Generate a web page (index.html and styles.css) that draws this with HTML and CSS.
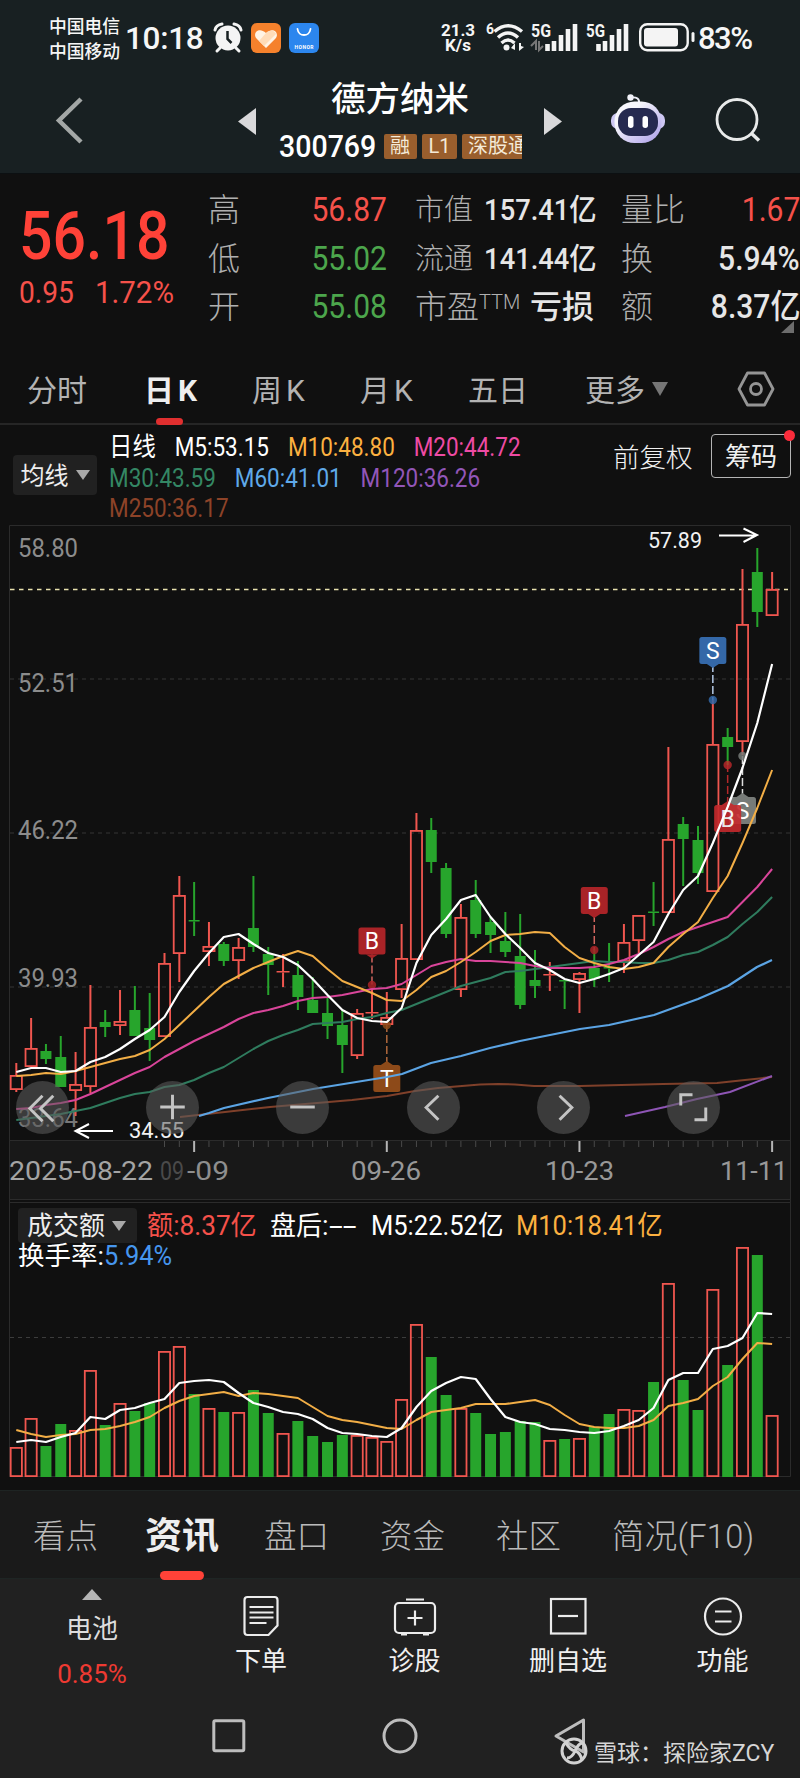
FILE: index.html
```
<!DOCTYPE html>
<html lang="zh-CN">
<head>
    <meta charset="UTF-8">
    <meta name="viewport" content="width=device-width, initial-scale=1.0">
    <title>德方纳米 300769</title>
    <link rel="stylesheet" href="styles.css">
</head>
<body>
    <header class="top">
        <div class="status">
            <div class="carriers">中国电信<br>中国移动</div>
            <div class="clock">10:18</div>
            <svg class="alarm" width="28" height="30" viewBox="0 0 28 30">
                <circle cx="14" cy="15" r="12.5" fill="#f4f4f4"/>
                <path d="M1 7Q2 2 8 1M27 7Q26 2 20 1M6 25l-3 3M22 25l3 3" fill="none" stroke="#f4f4f4" stroke-width="3" stroke-linecap="round"/>
                <path d="M13.5 8v8l4 4" fill="none" stroke="#182022" stroke-width="2.5"/>
            </svg>
            <svg class="app-orange" width="30" height="30" viewBox="0 0 30 30">
                <rect width="30" height="30" rx="6" fill="#f5812c"/>
                <path d="M15 25L5.5 15.500C1 10 8 3.500 15 10c7-6.500 14 0 9.500 5.500z" fill="#fff3e4"/>
                <path d="M15 10c5-4 9-2 10 1l-12 12-5-5z" fill="#ffdcb8"/>
            </svg>
            <svg class="app-blue" width="30" height="30" viewBox="0 0 30 30">
                <rect width="30" height="30" rx="6" fill="#2c86ee"/>
                <path d="M8.500 6c1 8 12 8 13 0" fill="none" stroke="#fff" stroke-width="1.800" stroke-linecap="round"/>
                <text x="15" y="26" text-anchor="middle" textLength="19" font-size="5" font-weight="700" fill="#fff">HONOR</text>
            </svg>
            <div class="speed">21.3<br>K/s</div>
            <svg class="wifi" width="38" height="30" viewBox="0 0 38 30">
                <text x="0" y="12" font-size="14" font-weight="700" fill="#f4f4f4">6</text>
                <g fill="none" stroke="#f4f4f4" stroke-width="3.400">
                    <path d="M8.500 9.500Q22-2 36 9.500M12 15.500Q22 6.500 32 15.500M15.500 21q6.500-6 13 0"/>
                </g>
                <circle cx="20.500" cy="25.500" r="3" fill="#f4f4f4"/>
                <path d="M25 26l4-5v7zM33 21v8l5-4-3-1v-3z" fill="#f4f4f4"/>
            </svg>
            <svg class="signal" width="47" height="30" viewBox="0 0 47 30">
                <text x="0" y="15" font-size="18" font-weight="700" textLength="20" lengthAdjust="spacingAndGlyphs" fill="#f4f4f4">5G</text>
                <path d="M0 24l5-5v9M8 19v9l4-4" stroke="#777" stroke-width="2" fill="none"/>
                <path d="M16.500 29v-7M23 29v-10M30 29v-16M37 29v-22M44 29v-27" stroke="#f4f4f4" stroke-width="4.600" fill="none"/>
            </svg>
            <svg class="signal" width="43" height="30" viewBox="0 0 43 30">
                <text x="0" y="15" font-size="18" font-weight="700" textLength="19" lengthAdjust="spacingAndGlyphs" fill="#f4f4f4">5G</text>
                <path d="M12.500 29v-7M19 29v-10M26 29v-16M33 29v-22M40 29v-27" stroke="#f4f4f4" stroke-width="4.600" fill="none"/>
            </svg>
            <svg class="battery" width="56" height="29" viewBox="0 0 56 29">
                <rect x="1.200" y="1.200" width="47.500" height="26" rx="7" fill="none" stroke="#f4f4f4" stroke-width="2.400"/>
                <rect x="5" y="5" width="34" height="18.500" rx="3" fill="#f4f4f4"/>
                <rect x="52.500" y="9" width="3" height="10" rx="1.500" fill="#f4f4f4"/>
            </svg>
            <div class="percent">83%</div>
        </div>
        <div class="titlebar">
            <svg class="back" width="28" height="48" viewBox="0 0 28 48"><path d="M25 2L3 23.500 25 45" fill="none" stroke="#a3a7a6" stroke-width="4.500"/></svg>
            <svg class="prev" width="18" height="27" viewBox="0 0 18 27"><path d="M18 0v27L0 13.500z" fill="#d9d9db"/></svg>
            <div class="stock">
                <h1>德方纳米</h1>
                <div class="code-row">
                    <span class="code"><span class="narrow">300769</span></span>
                    <span class="tag">融</span>
                    <span class="tag tag-l1">L1</span>
                    <span class="tag">深股通</span>
                </div>
            </div>
            <svg class="next" width="18" height="27" viewBox="0 0 18 27"><path d="M0 0v27l18-13.500z" fill="#d9d9db"/></svg>
            <svg class="robot" width="54" height="50" viewBox="0 0 54 50">
                <defs>
                    <linearGradient id="shell" x1="0" y1="0" x2="1" y2="1">
                        <stop offset=".3" stop-color="#f6f6fc"/>
                        <stop offset="1" stop-color="#a99be8"/>
                    </linearGradient>
                </defs>
                <path d="M20 3.500q9-1 8 6" fill="none" stroke="#eeeef8" stroke-width="2"/>
                <circle cx="19.500" cy="3.500" r="3.200" fill="#f2f2fa"/>
                <rect x="0" y="19" width="54" height="16" rx="7" fill="#cdc7f3"/>
                <rect x="3.500" y="7.500" width="47" height="41.500" rx="20" fill="url(#shell)"/>
                <rect x="7" y="14" width="40" height="28" rx="13" fill="#262a50"/>
                <rect x="17" y="22" width="5.500" height="12" rx="2.700" fill="#fff"/>
                <rect x="31.500" y="22" width="5.500" height="12" rx="2.700" fill="#fff"/>
            </svg>
            <svg class="search" width="46" height="45" viewBox="0 0 46 45"><circle cx="22" cy="21.500" r="20" fill="none" stroke="#e8eaea" stroke-width="2.800"/><path d="M36 35l8 7.500" stroke="#e8eaea" stroke-width="3.500"/></svg>
        </div>
    </header>

    <section class="quote">
        <div class="price">
            <div class="last"><span class="narrow">56.18</span></div>
            <div class="change"><span class="narrow">0.95</span><span class="narrow">1.72%</span></div>
        </div>
        <dl class="stats">
            <div><dt>高</dt><dd class="up">56.87</dd></div>
            <div><dt>低</dt><dd class="down">55.02</dd></div>
            <div><dt>开</dt><dd class="down">55.08</dd></div>
        </dl>
        <dl class="stats">
            <div class="small"><dt>市值</dt><dd>157.41亿</dd></div>
            <div class="small"><dt>流通</dt><dd>141.44亿</dd></div>
            <div><dt>市盈<sup>TTM</sup></dt><dd class="cjk">亏损</dd></div>
        </dl>
        <dl class="stats">
            <div><dt>量比</dt><dd class="up">1.67</dd></div>
            <div><dt>换</dt><dd>5.94%</dd></div>
            <div><dt>额</dt><dd>8.37亿</dd></div>
            <i class="corner"></i>
        </dl>
    </section>

    <nav class="periods">
        <a>分时</a>
        <a class="active">日<b>K</b></a>
        <a>周<b>K</b></a>
        <a>月<b>K</b></a>
        <a>五日</a>
        <a class="more">更多<i class="caret"></i></a>
        <svg width="38" height="36" viewBox="0 0 38 36"><path d="M10.500 2h17l8.500 16-8.500 16h-17L2 18z" fill="none" stroke="#959595" stroke-width="2.800" stroke-linejoin="round"/><circle cx="19" cy="18" r="5.500" fill="none" stroke="#959595" stroke-width="2.800"/></svg>
    </nav>

    <section class="legend">
        <button class="picker">均线<i class="caret"></i></button>
        <div class="averages">
            <div><span class="white cjk">日线</span><span class="white">M5:53.15</span><span class="m10">M10:48.80</span><span class="m20">M20:44.72</span></div>
            <div><span class="m30">M30:43.59</span><span class="m60">M60:41.01</span><span class="m120">M120:36.26</span></div>
            <div><span class="m250">M250:36.17</span></div>
        </div>
        <span class="adjust">前复权</span>
        <button class="chips">筹码<i class="dot"></i></button>
    </section>

    <section class="chart">
        <svg id="kline" width="800" height="675" viewBox="0 525 800 675"></svg>
        <div class="tools">
            <button><svg viewBox="0 0 54 54"><path d="M27 15L14 28l13 13M38 15L25 28l13 13"/></svg></button>
            <button><svg viewBox="0 0 54 54"><path d="M27 14v25M14.500 26.500h25"/></svg></button>
            <button><svg viewBox="0 0 54 54"><path d="M14.500 26.500h25"/></svg></button>
            <button><svg viewBox="0 0 54 54"><path d="M32 15L19.500 27 32 39.500"/></svg></button>
            <button><svg viewBox="0 0 54 54"><path d="M23 15l12.500 12L23 39.500"/></svg></button>
            <button><svg viewBox="0 0 54 54"><path d="M14 25V14h12M28 39.500h11.500V27"/></svg></button>
        </div>
    </section>

    <section class="volume">
        <div class="volume-head">
            <button class="picker">成交额<i class="caret"></i></button>
            <span class="amount"><span class="narrow">额:8.37亿</span></span>
            <span class="after"><em>盘后</em>:<span class="dashes">--</span></span>
            <span class="v5"><span class="narrow">M5:22.52亿</span></span>
            <span class="v10"><span class="narrow">M10:18.41亿</span></span>
        </div>
        <div class="turnover">换手率:<b>5.94%</b></div>
        <svg id="bars" width="800" height="290" viewBox="0 1200 800 290"></svg>
    </section>

    <nav class="pages">
        <a>看点</a>
        <a class="active">资讯</a>
        <a>盘口</a>
        <a>资金</a>
        <a>社区</a>
        <a class="fade">简况(F10)</a>
    </nav>

    <footer class="bottom">
        <div class="actions">
            <div class="sector"><i class="caret up-caret"></i><span>电池</span><strong>0.85%</strong></div>
            <div><svg width="44" height="42" viewBox="0 0 44 42"><path d="M8.500 2h27q3 0 3 3v25.500L29.500 40h-21q-3 0-3-3V5q0-3 3-3z"/><path d="M10.500 12h24M10.500 17.500h24M10.500 22.500h24M10.500 28h17"/></svg><span>下单</span></div>
            <div><svg width="44" height="42" viewBox="0 0 44 42"><rect x="2" y="8" width="40" height="30" rx="4"/><path d="M13 4.500h18M22 15.500v15M14.500 23h15M8 39.500h6M30 39.500h6"/></svg><span>诊股</span></div>
            <div><svg width="44" height="42" viewBox="0 0 44 42"><rect x="5" y="4" width="34.500" height="34.500"/><path d="M12 21h20"/></svg><span>删自选</span></div>
            <div><svg width="44" height="42" viewBox="0 0 44 42"><circle cx="22" cy="21.500" r="18"/><path d="M14 16.500h16.500M14 26.500h16.500"/></svg><span>功能</span></div>
        </div>
        <div class="system">
            <svg width="34" height="34" viewBox="0 0 34 34"><rect x="1.800" y="1.800" width="30" height="30" rx="1.500"/></svg>
            <svg width="36" height="36" viewBox="0 0 36 36"><circle cx="18" cy="18" r="16"/></svg>
            <svg width="32" height="36" viewBox="0 0 32 36"><path d="M29.500 2v32L2 18z"/></svg>
        </div>
        <div class="watermark">
            <svg width="28" height="28" viewBox="0 0 28 28"><circle cx="14" cy="14" r="12"/><path d="M6 6q4 7 9 8t7 9M22 6q-4 1-7 8t-8 7"/></svg>
            <span>雪球</span><span>：</span><span>探险家ZCY</span>
        </div>
    </footer>
    <script src="chart.js"></script>
</body>
</html>
```
FILE: styles.css
```
* { box-sizing: border-box; }
body { margin: 0; width: 800px; height: 1778px; overflow: hidden; background: #101010; color: #e6e6e6; font-family: Roboto, "Noto Sans CJK SC", sans-serif; }
svg { display: block; flex: none; overflow: visible; }
svg text { font-family: Roboto, "Noto Sans CJK SC", sans-serif; }
button { font: inherit; color: inherit; border: none; padding: 0; }
h1, dl, dd { margin: 0; font-weight: 400; }
em, i { font-style: normal; }
.narrow { display: inline-block; transform: scaleX(.88); transform-origin: left; }

/* status bar and title */
.top { height: 174px; background: #182022; border-bottom: 1px solid #0c1012; }
.status { display: flex; height: 77px; padding: 0 0 0 49px; color: #f6f6f6; white-space: nowrap; }
.carriers { width: 76px; padding-top: 15px; font-size: 17.800px; line-height: 24.500px; font-weight: 500; }
.clock { width: 89px; padding-top: 20px; font-size: 31.500px; line-height: 38px; font-weight: 500; letter-spacing: -.3px; }
.alarm { margin-top: 23px; }
.app-orange { margin: 23px 0 0 9px; }
.app-blue { margin: 23px 0 0 8px; }
.speed { width: 42px; margin-left: 118px; padding-top: 23px; margin-right: 7px; text-align: center; font-size: 17px; line-height: 15px; font-weight: 700; }
.wifi { margin: 22px 0 0 0; }
.signal { margin: 22px 0 0 7px; }
.signal + .signal { margin-left: 8px; }
.battery { margin: 23px 0 0 10px; }
.percent { padding: 20px 0 0 3px; font-size: 31px; line-height: 38px; font-weight: 500; letter-spacing: -1.500px; }
.titlebar { display: flex; height: 96px; padding-left: 56px; }
.back { margin-top: 20px; }
.prev { margin: 31px 0 0 154px; }
.stock { width: 266px; margin: 0 0 0 22px; padding-left: 1px; }
.stock h1 { padding-left: 52px; font-size: 34.500px; line-height: 44px; font-weight: 500; color: #fff; white-space: nowrap; }
.code-row { display: flex; align-items: center; width: 243px; height: 44px; margin-top: 4px; padding-bottom: 2px; gap: 5px; overflow: hidden; }
.code { width: 100px; flex: none; font-size: 31px; font-weight: 500; color: #fff; }
.code .narrow { transform: scaleX(.92); }
.tag { flex: none; height: 25px; padding: 0 6px; border-radius: 2px; background: #995e2d; color: #f4ead8; font-size: 20px; line-height: 24px; }
.tag:nth-child(2) { width: 33px; }
.tag-l1 { width: 35px; text-align: center; }
.next { margin: 31px 0 0 0; }
.robot { margin: 17px 0 0 49px; }
.search { margin: 21px 0 0 50px; }

/* quote */
.quote { display: flex; height: 176px; padding: 12px 0 0 19px; }
.price { flex: none; width: 189px; color: #ff4238; }
.last { font-size: 67px; line-height: 76px; padding-top: 12px; font-weight: 500; height: 86px; white-space: nowrap; }
.change { display: flex; font-size: 32px; line-height: 38px; padding-top: 1px; color: #f5514a; }
.change span { width: 76px; }
.change span + span { transform: scaleX(.92); }
.stats { position: relative; flex: none; width: 179px; margin-right: 28px; }
.stats + .stats { margin-right: 27px; }
.stats > div { display: flex; justify-content: space-between; height: 48.500px; line-height: 48px; white-space: nowrap; }
.stats dt { font-size: 32px; color: #b0b0b0; font-weight: 300; }
.stats sup { font-size: 20px; line-height: 10px; vertical-align: 9px; }
.stats dd { font-size: 33px; font-weight: 500; transform: scaleX(.91); transform-origin: right; }
.stats .small dt { font-size: 29px; }
.stats .small dd { font-size: 30px; transform: scaleX(.91); }
.stats .cjk { font-size: 32px; transform: none; }
.stats .up { color: #f5514a; font-weight: 400; }
.stats .down { color: #4ca64c; font-weight: 400; }
.corner { position: absolute; right: 6px; top: 135px; border-left: 13px solid transparent; border-bottom: 12px solid #6d6d6d; }

/* chart period tabs */
.periods { display: flex; height: 75px; border-bottom: 2px solid #262626; padding-left: 27px; font-size: 30px; line-height: 81px; color: #b3b3b3; }
.periods a { position: relative; height: 73px; white-space: nowrap; }
.periods b { margin-left: 4px; font-weight: 400; }
.periods a:nth-child(1) { width: 117px; }
.periods a:nth-child(2), .periods a:nth-child(3), .periods a:nth-child(4) { width: 108px; }
.periods a:nth-child(5) { width: 117px; }
.periods .more { width: 152px; }
.periods .active, .periods .active b { color: #eee; font-weight: 700; }
.periods .active::after { content: ""; position: absolute; left: 12px; bottom: -2px; width: 27px; height: 7px; border-radius: 4px; background: #e02f2f; }
.periods svg { margin-top: 21px; }
.caret { display: inline-block; border: 7px solid transparent; border-top: 10px solid #a9a9a9; border-bottom: 0; margin-left: 7px; vertical-align: 4px; }
.more .caret { border-width: 14px 8px 0; border-top-color: #767676; margin-left: 7px; vertical-align: 5px; }

/* moving average legend */
.legend { display: flex; height: 100px; padding-left: 13px; }
.picker { display: block; height: 40px; border-radius: 4px; background: #212121; color: #eee; font-size: 24px; line-height: 42px; white-space: nowrap; }
.legend .picker { flex: none; width: 84px; margin-top: 30px; }
.averages { flex: none; width: 493px; margin-left: 12px; padding-top: 8px; font-size: 25px; line-height: 30.500px; white-space: nowrap; transform: scaleX(.9); transform-origin: left; }
.averages span { margin-right: 21px; }
.averages .cjk { font-size: 26px; line-height: 24px; }
.white { color: #fff; }
.m10 { color: #fcb140; }
.m20 { color: #ef4ba4; }
.m30 { color: #348764; }
.m60 { color: #5fa9e9; }
.m120 { color: #9256b8; }
.m250 { color: #8d4328; }
.adjust { flex: none; width: 98px; margin-left: 11px; font-size: 26.500px; line-height: 66px; font-weight: 300; color: #f0f0f0; }
.chips { position: relative; width: 80px; height: 44px; margin-top: 9px; border: 1px solid #b5b5b5; border-radius: 4px; background: none; font-size: 26px; line-height: 44px; color: #f0f0f0; }
.dot { position: absolute; right: -5px; top: -5px; width: 11px; height: 11px; border-radius: 50%; background: #fb2c3b; }

/* candles */
.chart { position: relative; height: 675px; }
.tools { position: absolute; left: 15.500px; top: 556px; display: flex; gap: 77.400px; }
.tools button { width: 53px; height: 53px; border-radius: 50%; background: rgba(92, 92, 92, .56); }
.tools svg { width: 53px; height: 53px; fill: none; stroke: #c4c4c4; stroke-width: 3; }

/* turnover */
.volume { position: relative; height: 290px; }
.volume-head { display: flex; padding: 8px 0 0 18px; height: 43px; font-size: 27px; line-height: 36px; white-space: nowrap; }
.volume em { font-size: 26px; }
.volume-head .picker { width: 119px; height: 35px; margin-right: 10px; padding-right: 2px; font-size: 26px; line-height: 36px; }
.volume-head .narrow { transform: scaleX(.945); }
.amount { width: 123px; color: #f5514a; }
.amount .narrow { transform: scaleX(.97); }
.after { width: 101px; color: #fff; }
.dashes { display: inline-block; transform: scaleX(1.85); transform-origin: left; }
.v5 { width: 145px; color: #fff; }
.v10 { color: #fcb140; }
.turnover { padding-left: 18px; font-size: 26.500px; line-height: 26px; color: #fff; }
.turnover b { display: inline-block; font-weight: 400; font-size: 27px; color: #4696ee; transform: scaleX(.94); transform-origin: left; }
#bars { position: absolute; left: 0; top: 0; z-index: -1; }

/* page tabs */
.pages { display: flex; height: 88px; background: #1a1a1a; border-top: 1px solid #1e2423; padding-left: 33px; font-size: 32.500px; line-height: 92px; color: #bababa; font-weight: 300; white-space: nowrap; }
.pages a { position: relative; width: 116px; }
.pages a:nth-child(1) { width: 112px; }
.pages .active { width: 119px; font-size: 37px; font-weight: 700; color: #eee; }
.pages .active::after { content: ""; position: absolute; left: 15px; bottom: -2px; width: 44px; height: 9px; border-radius: 5px; background: #ff4238; z-index: 1; }
.pages .fade { width: 145px; letter-spacing: .3px; }

/* bottom bar */
.bottom { position: relative; height: 200px; background: #212121; border-top: 1px solid #1e2524; }
.actions { display: grid; grid-template-columns: 184px 154px 153px 154px 155px; height: 124px; }
.actions > div { display: flex; flex-direction: column; align-items: center; font-size: 26px; line-height: 36px; padding-top: 16px; color: #f0f0f0; }
.actions svg { fill: none; stroke: #ececec; stroke-width: 2.200; margin-bottom: 6px; }
.actions .sector { padding-top: 10px; }
.up-caret { border: 10px solid transparent; border-bottom: 11px solid #b5b5b5; border-top: 0; margin: 0 0 11px; }
.sector strong { margin-top: 9px; font-weight: 400; font-size: 26px; color: #ee3a32; }
.sector span { color: #ddd; }
.system { display: flex; padding-left: 212px; height: 66px; align-items: center; }
.system svg { fill: none; stroke: #bdbdbd; stroke-width: 3; stroke-linejoin: round; margin-right: 136px; }
.watermark { position: absolute; left: 560px; top: 155px; display: flex; align-items: center; height: 34px; font-size: 23px; color: #d6d6d6; white-space: nowrap; }
.watermark svg { margin-right: 6px; fill: none; stroke: #d2d2d2; stroke-width: 3; }
```
FILE: chart.js
```
const X0 = 16.3, STEP = 14.82;
const x = i => X0 + STEP * i;

// direction, high, body top, body bottom, low, top of turnover bar
const days = [
    ['r', 1063, 1075, 1090, 1092, 1447], ['r', 1018, 1048, 1067, 1067, 1418], ['g', 1044, 1051, 1059, 1064, 1446],
    ['g', 1036, 1057, 1087, 1087, 1424], ['r', 1052, 1084, 1091, 1116, 1430], ['r', 985, 1027, 1087, 1093, 1370],
    ['g', 1010, 1022, 1027, 1037, 1425], ['r', 990, 1021, 1026, 1035, 1403], ['g', 986, 1010, 1036, 1036, 1411],
    ['g', 993, 1028, 1040, 1061, 1403], ['r', 953, 963, 1037, 1037, 1351], ['r', 876, 895, 954, 982, 1346],
    ['g', 882, 920, 921.5, 936, 1394], ['r', 922, 946, 952, 966, 1408], ['g', 942, 944, 961, 966, 1412],
    ['r', 938, 947, 961, 979, 1412], ['g', 876, 928, 947, 952, 1390], ['g', 947, 954, 965, 995, 1413],
    ['r', 954, 971, 972.5, 987, 1433], ['g', 961, 975, 997, 1010, 1421], ['g', 977, 1000, 1013, 1013, 1436],
    ['g', 997, 1013, 1026, 1039, 1442], ['g', 1010, 1025, 1045, 1073, 1435], ['r', 1009, 1013, 1056, 1059, 1435],
    ['r', 988, 1012, 1013.5, 1019, 1437], ['r', 992, 1017, 1025, 1025, 1441], ['r', 924, 958, 990, 998, 1399],
    ['r', 813, 830, 960, 960, 1324], ['g', 818, 830, 862, 873, 1357], ['g', 863, 868, 934, 938, 1395],
    ['r', 904, 917, 990, 997, 1408], ['g', 880, 900, 934, 938, 1413], ['g', 917, 922, 935, 953, 1434],
    ['g', 912, 941, 952, 957, 1432], ['g', 914, 956, 1005, 1009, 1421], ['g', 950, 980, 986, 998, 1422],
    ['r', 962, 974, 975.5, 991, 1440], ['g', 980, 980, 981.5, 1009, 1439], ['r', 972, 973, 980, 1013, 1438],
    ['g', 949, 968, 979, 987, 1427], ['g', 943, 967, 968.5, 982, 1414], ['r', 924, 942, 962, 973, 1409],
    ['r', 915, 915, 941, 953, 1410], ['g', 882, 911.5, 913, 926, 1382], ['r', 747, 839, 913, 913, 1283],
    ['g', 817, 824, 839, 886, 1380], ['g', 826, 840, 873, 884, 1410], ['r', 700, 744, 892, 892, 1289],
    ['g', 728, 737, 747, 765, 1365], ['r', 569, 624, 742, 755, 1247], ['g', 548, 572, 612, 627, 1255],
    ['r', 572, 589, 616, 616, 1415]
];

const m5 = [1072,1068,1068,1072,1071,1062,1057,1049,1039,1030,1017,992,971,953,937,934,944,953,957,965,979,995,1010,1018,1021,1022,1008,963,935,919,900,895,917,934,948,963,970,979,983,979,974,968,955,942,914,890,876,843,807,768,723,664];
const m10 = [1076,1075,1073,1074,1071,1067,1063,1059,1056,1050,1039,1025,1011,997,984,976,968,962,956,951,956,969,981,987,993,1000,1001,990,977,971,962,952,941,935,934,932,933,947,958,963,967,969,967,963,947,934,922,898,876,843,808,770];
const m20 = [1109,1108,1105,1103,1100,1094,1087,1080,1073,1067,1057,1049,1041,1034,1027,1019,1013,1010,1006,1001,998,997,995,992,989,988,984,975,966,962,959,961,961,962,963,966,968,968,968,967,964,960,954,947,939,932,927,922,917,902,887,869];
const m30 = [1120,1118,1116,1114,1111,1108,1103,1098,1094,1092,1087,1085,1080,1073,1067,1058,1049,1041,1035,1030,1024,1023,1022,1019,1017,1013,1010,1004,998,992,986,982,978,972,971,969,967,965,963,961,962,962,963,963,960,955,952,945,937,924,912,897];
const v5 = [1442,1440,1442,1437,1433,1417,1419,1410,1408,1403,1399,1383,1381,1380,1382,1393,1403,1407,1412,1414,1419,1428,1433,1434,1436,1437,1428,1407,1391,1383,1377,1379,1399,1417,1422,1424,1429,1430,1432,1433,1431,1426,1420,1408,1380,1373,1373,1349,1346,1338,1313,1314];
const v10 = [1430,1434,1437,1435,1434,1430,1429,1426,1422,1417,1408,1401,1396,1394,1392,1396,1393,1394,1396,1398,1407,1416,1420,1422,1425,1428,1429,1420,1412,1410,1408,1404,1404,1404,1402,1400,1405,1415,1424,1427,1428,1428,1426,1420,1406,1403,1399,1386,1377,1359,1343,1344];

// the long averages are nearly straight, a few points are enough
const m60 = '199,1116 209,1113 224,1108 268,1098 313,1089 387,1077 402,1074 431,1063 461,1056 490,1048 520,1041 535,1038 580,1029 609,1025 654,1015 698,999 728,986 757,967 772,960';
const m120 = '625,1116 665,1107 697,1099 730,1092 772,1076';
const m250 = '180,1117 225,1112 270,1107 352,1100 387,1096 415,1091 438,1088 462,1086 480,1084.500 498,1084 515,1084.500 534,1086 580,1086 663,1084 717,1083 745,1080 772,1077';

const RED = '#f0564f', GREEN = '#27a52c';

function line(x1, y1, x2, y2, color, extra = '') {
    return `<line x1="${x1}" y1="${y1}" x2="${x2}" y2="${y2}" stroke="${color}" ${extra}/>`;
}

function curve(points, color, width = 2) {
    const p = typeof points === 'string' ? points : points.map((y, i) => x(i) + ',' + y).join(' ');
    return `<polyline points="${p}" fill="none" stroke="${color}" stroke-width="${width}" stroke-linejoin="round"/>`;
}

function label(str, lx, y, width, size, color) {
    return `<text x="${lx}" y="${y}" textLength="${width}" lengthAdjust="spacingAndGlyphs" font-size="${size}" fill="${color}">${str}</text>`;
}

function box(cx, top, bottom, color) {
    if (color === 'g') return `<rect x="${cx - 5.5}" y="${top}" width="11" height="${bottom - top}" fill="${GREEN}"/>`;
    if (bottom - top < 2) return `<rect x="${cx - 6.5}" y="${top}" width="13" height="${bottom - top}" fill="${RED}"/>`;
    return `<rect x="${cx - 5.6}" y="${top + .9}" width="11.2" height="${bottom - top - 1.8}" fill="none" stroke="${RED}" stroke-width="1.8"/>`;
}

function candle([c, high, top, bottom, low], i) {
    const color = c === 'r' ? RED : GREEN;
    return line(x(i), high, x(i), top, color, 'stroke-width="2"') + line(x(i), bottom, x(i), low, color, 'stroke-width="2"') + box(x(i), top, bottom, c);
}

// trade flag: letter box, dashed leader, dot on the candle
function flag(letter, i, top, dotY, color, opacity = 1, leader = color) {
    const cx = x(i), below = dotY > top;
    const tip = below ? top + 27 : top;
    const d = below ? 4 : -4;
    return `<g opacity="${opacity}">` + line(cx, tip, cx, dotY, leader, 'stroke-width="1.5" stroke-dasharray="8 3"') +
        `<circle cx="${cx}" cy="${dotY}" r="4.2" fill="${color}" opacity=".85"/>` +
        `<rect x="${cx - 13.5}" y="${top}" width="27" height="27" rx="2.5" fill="${color}"/>` +
        `<path d="M${cx - 6} ${tip}l6 ${d}l6 ${-d}z" fill="${color}"/>` +
        `<text x="${cx}" y="${top + 21.5}" text-anchor="middle" font-size="23" fill="#fff">${letter}</text></g>`;
}

function drawKline() {
    let out = '<rect x="9" y="1140" width="782" height="60" fill="#181818"/>';
    out += '<path d="M9.500 1200V525.500H790.500V1200M9.500 1140.500H790.500M9.500 1199.500H790.500" fill="none" stroke="#2b2b2b"/>';
    [679, 833, 987].forEach(y => out += line(10, y, 790, y, '#353535', 'stroke-dasharray="4 4"'));
    out += line(10, 589.500, 788, 589.500, '#e9e2ae', 'stroke-width="1.5" stroke-dasharray="4.5 4.500"');
    out += label('58.80', 18, 557, 60, 25, '#8c8c8c') + label('52.51', 18, 692, 60, 25, '#8c8c8c') +
        label('46.22', 18, 839, 60, 25, '#8c8c8c') + label('39.93', 18, 987, 60, 25, '#8c8c8c') + label('33.64', 18, 1127, 60, 25, '#777');
    out += days.map(candle).join('');
    out += flag('S', 49, 797, 756, '#777b78', 1, '#ddd') + flag('B', 48, 805, 765, '#c62a2d', .9);
    out += flag('B', 24, 927.5, 985, '#a92327', 1, '#d2655f') + flag('T', 25, 1065, 1025, '#8d4a19', 1, '#b0683c') + flag('B', 39, 887, 950, '#a92327', 1, '#d2655f') + flag('S', 47, 637, 700, '#3468a8', 1, '#b5cbe8');
    out += curve(m250, '#7f402a') + curve(m120, '#8e55b5') + curve(m60, '#5ba4e4', 2.2) + curve(m30, '#2f7c5e') + curve(m20, '#d9459a') + curve(m10, '#f2ae46') + curve(m5, '#fff', 2.2);
    out += label('57.89', 648, 548, 54, 22, '#f2f2f2') + '<path d="M719 535.500H756M743.500 528.500L757 535l-13.500 7" fill="none" stroke="#fff" stroke-width="2"/>';
    out += label('34.55', 129, 1138, 55, 22, '#f2f2f2') + '<path d="M113 1131H76M89 1124l-13.500 7 13.500 7" fill="none" stroke="#fff" stroke-width="2"/>';
    for (let i = 10; i < 52; i++) {
        const major = [12, 25, 38, 51].includes(i);
        out += line(x(i), 1141, x(i), major ? 1152 : 1147, major ? '#b5b5b5' : '#4a4a4a', major ? 'stroke-width="2"' : '');
    }
    out += label('2025-08-22', 9, 1180, 144, 26, '#a4a4a4') + label('09', 160, 1180, 24, 26, '#4a4a4a') + label('-09', 187, 1180, 42, 26, '#8e8e8e') +
        label('09-26', 351, 1180, 70, 26, '#989898') + label('10-23', 545, 1180, 69, 26, '#989898') + label('11-11', 720, 1180, 68, 26, '#989898');
    document.getElementById('kline').innerHTML = out;
}

function drawBars() {
    let out = '<path d="M9.500 1200V1476.500H790.500V1200M9.500 1202.500H790.500" fill="none" stroke="#2b2b2b"/>';
    out += line(10, 1337.500, 790, 1337.500, '#3c3c3c', 'stroke-dasharray="4 4"');
    out += days.map((d, i) => box(x(i), d[5], 1477, d[0])).join('');
    out += curve(v10, '#f2ae46') + curve(v5, '#fff', 2.2);
    document.getElementById('bars').innerHTML = out;
}

drawKline();
drawBars();
```
